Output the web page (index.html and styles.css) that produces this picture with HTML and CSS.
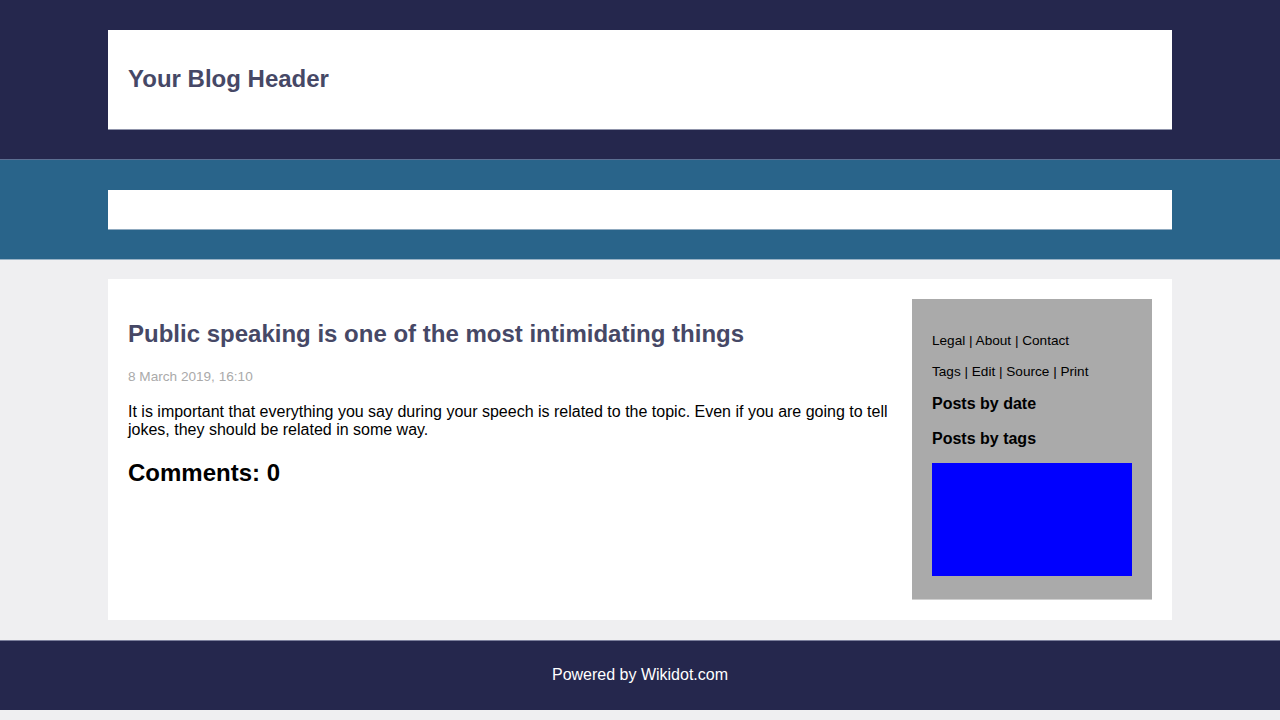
FILE: index.html
```html
<!DOCTYPE html>
<html lang="en">
<head>
<meta charset="utf-8">
<title>Your Blog</title>
<link rel="stylesheet" href="styles.css">
</head>
<body>
<header class="site-header">
  <div class="wrap header-box">
    <h1 class="site-title">Your Blog Header</h1>
  </div>
</header>
<nav class="site-nav">
  <div class="wrap nav-box"></div>
</nav>
<main class="wrap content">
  <article class="post">
    <h2 class="post-title">Public speaking is one of the most intimidating things</h2>
    <p class="post-date">8 March 2019, 16:10</p>
    <p class="post-body">It is important that everything you say during your speech is related to the topic. Even if you are going to tell jokes, they should be related in some way.</p>
    <h2 class="comments">Comments: 0</h2>
  </article>
  <aside class="sidebar">
    <p class="side-links">Legal | About | Contact</p>
    <p class="side-links">Tags | Edit | Source | Print</p>
    <h4 class="side-head first">Posts by date</h4>
    <h4 class="side-head">Posts by tags</h4>
    <div class="side-block"></div>
  </aside>
</main>
<footer class="site-footer">
  <p class="footer-text">Powered by Wikidot.com</p>
</footer>
</body>
</html>
```
FILE: styles.css
```css
html, body {
  margin: 0;
  padding: 0;
}
body {
  background: #efeff1;
  font-family: "Liberation Sans", Arial, sans-serif;
  color: #000;
}
.wrap {
  width: 1064px;
  margin: 0 auto;
  box-sizing: border-box;
}
.site-header {
  background: #25274d;
  padding: 30px 0 29px;
  border-bottom: 1px solid #5c6f92;
}
.header-box {
  background: #fff;
  padding: 20px;
  height: 100px;
  border-bottom: 1px solid #8f93aa;
}
.site-title {
  margin: 15px 0 0;
  font-size: 24px;
  line-height: 28px;
  font-weight: bold;
  color: #464866;
}
.site-nav {
  background: #29648a;
  padding: 30px 0 29px;
  border-bottom: 1px solid #9ab3c6;
}
.nav-box {
  background: #fff;
  height: 40px;
  border-bottom: 1px solid #8fa9bf;
}
.content {
  margin-top: 19px;
  margin-bottom: 20px;
  background: #fff;
  padding: 20px;
  display: flex;
  gap: 20px;
  align-items: flex-start;
}
.post {
  flex: 1;
  min-width: 0;
}
.post-title {
  margin: 21px 0 21px;
  font-size: 24px;
  line-height: 28px;
  font-weight: bold;
  color: #464866;
}
.post-date {
  margin: 0 0 19px;
  font-size: 13.6px;
  color: #aaa;
}
.post-body {
  margin: 0 0 20px;
  font-size: 16px;
}
.comments {
  margin: 0;
  font-size: 24px;
  line-height: 28px;
  font-weight: bold;
}
.sidebar {
  width: 240px;
  flex: none;
  box-sizing: border-box;
  height: 301px;
  background: #aaa;
  padding: 20px;
  border-bottom: 1px solid #cfcfcf;
}
.side-links {
  margin: 14px 0 15.6px;
  font-size: 13.6px;
}
.side-head {
  margin: 17px 0 0;
  font-size: 16px;
  line-height: 18px;
  font-weight: bold;
}
.side-head.first {
  margin-top: 16px;
}
.side-block {
  margin-top: 15px;
  height: 113px;
  background: #00f;
}
.site-footer {
  background: #25274d;
  border-top: 1px solid #7c7f9c;
  height: 69px;
  box-sizing: content-box;
  display: flex;
  align-items: center;
  justify-content: center;
  margin-bottom: 10px;
}
.footer-text {
  margin: 0 0 2px;
  color: #fff;
  font-size: 16px;
}
```
